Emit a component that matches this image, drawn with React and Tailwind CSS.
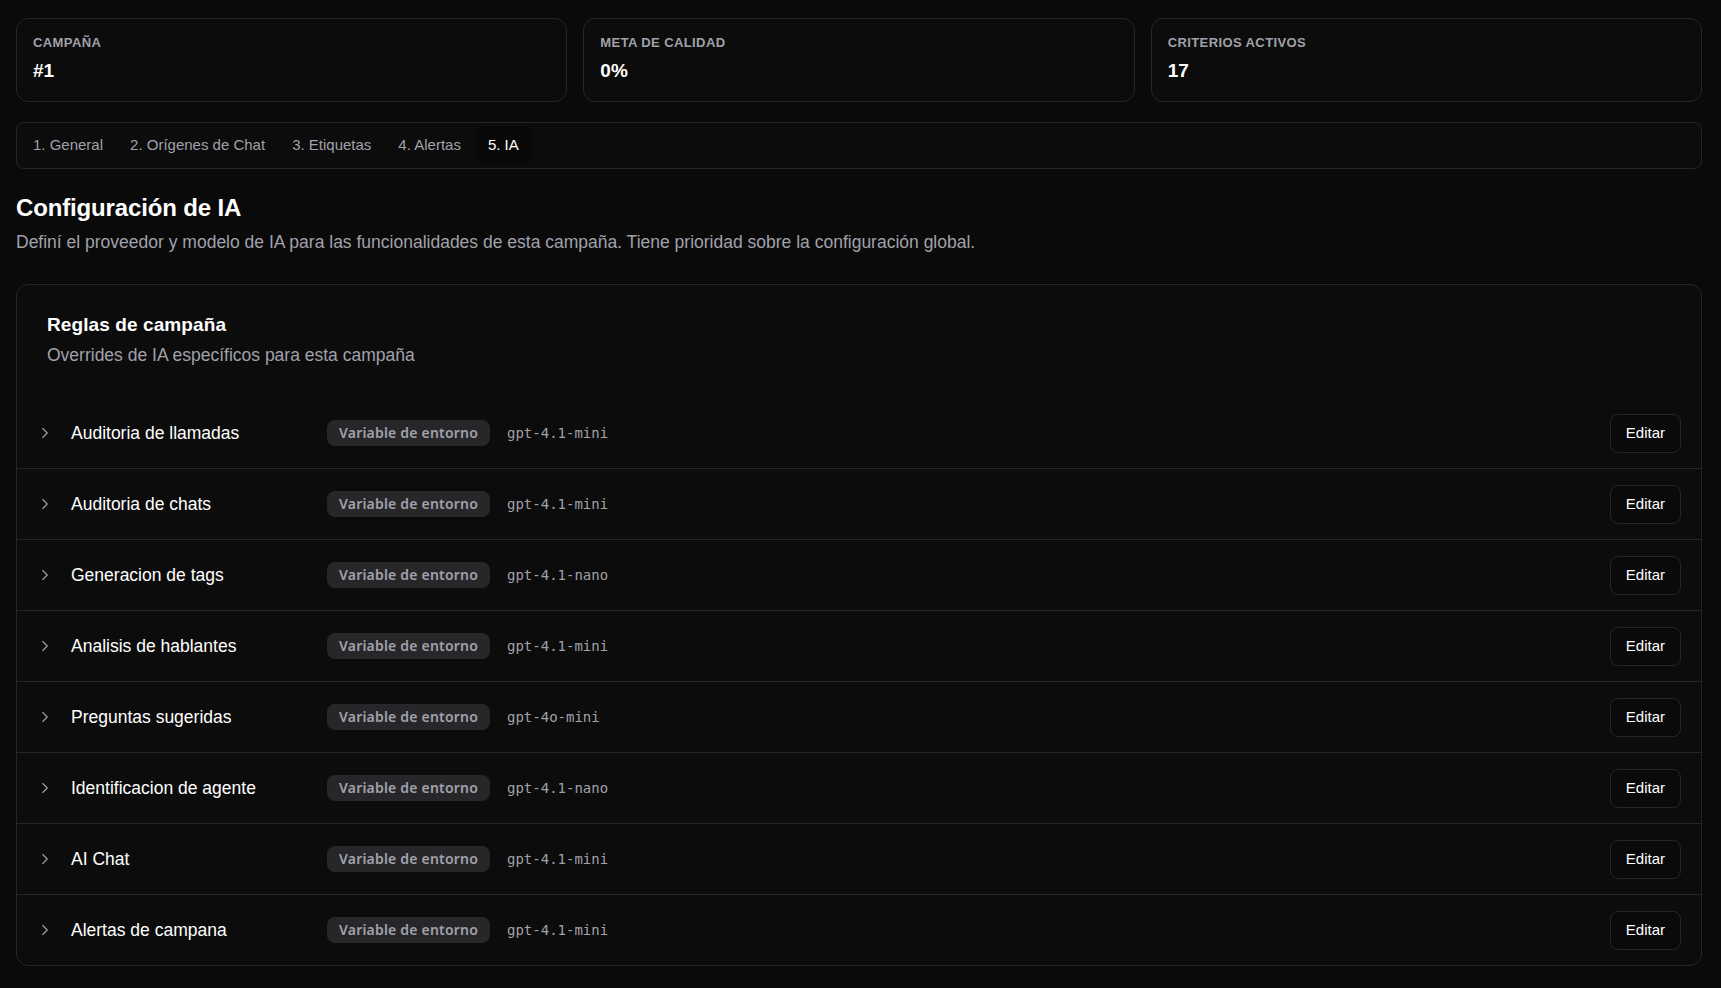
import { ChevronRight } from 'lucide-react';

const stats = [
  { label: 'Campaña', value: '#1' },
  { label: 'Meta de calidad', value: '0%' },
  { label: 'Criterios activos', value: '17' },
];

const tabs = ['1. General', '2. Orígenes de Chat', '3. Etiquetas', '4. Alertas', '5. IA'];

const rules = [
  { name: 'Auditoria de llamadas', model: 'gpt-4.1-mini' },
  { name: 'Auditoria de chats', model: 'gpt-4.1-mini' },
  { name: 'Generacion de tags', model: 'gpt-4.1-nano' },
  { name: 'Analisis de hablantes', model: 'gpt-4.1-mini' },
  { name: 'Preguntas sugeridas', model: 'gpt-4o-mini' },
  { name: 'Identificacion de agente', model: 'gpt-4.1-nano' },
  { name: 'AI Chat', model: 'gpt-4.1-mini' },
  { name: 'Alertas de campana', model: 'gpt-4.1-mini' },
];

export default function App() {
  return (
    <div className="min-h-screen bg-[#0a0a0a] px-4 pt-[18px] pb-6 text-white font-['Liberation_Sans',Arial,sans-serif]">
      <div className="grid grid-cols-3 gap-4 pr-[3px]">
        {stats.map((stat) => (
          <div key={stat.label} className="rounded-xl border border-[#262626] bg-[#0c0c0c] px-4 pt-4 pb-[16px]">
            <p className="text-[13px] font-bold uppercase leading-4 tracking-[0.4px] text-[#a1a1aa]">{stat.label}</p>
            <p className="mt-1.5 text-[19px] font-bold leading-7 text-white">{stat.value}</p>
          </div>
        ))}
      </div>

      <div className="mt-5 mr-[3px] flex items-center gap-[3px] rounded-lg border border-[#262626] bg-[#0c0c0c] p-1">
        {tabs.map((tab, index) => (
          <button
            key={tab}
            type="button"
            className={
              index === tabs.length - 1
                ? 'h-[37px] rounded-md bg-[#090909] px-3 text-[15px] font-medium text-white'
                : 'h-[37px] rounded-md px-3 text-[15px] text-[#a1a1aa]'
            }
          >
            {tab}
          </button>
        ))}
      </div>

      <h1 className="mt-[23px] text-2xl font-bold leading-8 tracking-[-0.15px]">Configuración de IA</h1>
      <p className="mt-1.5 text-[17.5px] leading-6 text-[#a1a1aa]">
        Definí el proveedor y modelo de IA para las funcionalidades de esta campaña. Tiene prioridad sobre la configuración global.
      </p>

      <section className="mt-[30px] mr-[3px] rounded-xl border border-[#262626] bg-[#0c0c0c]">
        <div className="px-[30px] pt-[26px] pb-[31px]">
          <h2 className="text-[19px] font-bold leading-7 tracking-[0.1px]">Reglas de campaña</h2>
          <p className="mt-1 text-[17.5px] leading-6 text-[#a1a1aa]">Overrides de IA específicos para esta campaña</p>
        </div>

        <div>
          {rules.map((rule, index) => (
            <div
              key={rule.name}
              className={
                index === rules.length - 1
                  ? 'flex h-[70px] items-center px-5'
                  : 'flex h-[71px] items-center border-b border-[#262626] px-5'
              }
            >
              <span className="-ml-0.5 flex h-5 w-5 items-center justify-center text-[#a1a1aa]">
                <ChevronRight size={18} strokeWidth={1.5} />
              </span>
              <span className="ml-4 w-[240px] text-[17.5px] text-white">{rule.name}</span>
              <span className="ml-4 inline-flex h-[26px] items-center rounded-lg bg-[#27272a] px-3 pb-px text-[14px] font-semibold tracking-[0.2px] text-[#a1a1aa] font-['Noto_Sans',sans-serif]">
                Variable de entorno
              </span>
              <span className="ml-[17px] text-sm text-[#a1a1aa] font-['DejaVu_Sans_Mono',monospace]">{rule.model}</span>
              <button
                type="button"
                className="ml-auto h-[39px] rounded-lg border border-[#262626] bg-[#0a0a0a] px-[15px] text-[15px] text-white"
              >
                Editar
              </button>
            </div>
          ))}
        </div>
      </section>
    </div>
  );
}
